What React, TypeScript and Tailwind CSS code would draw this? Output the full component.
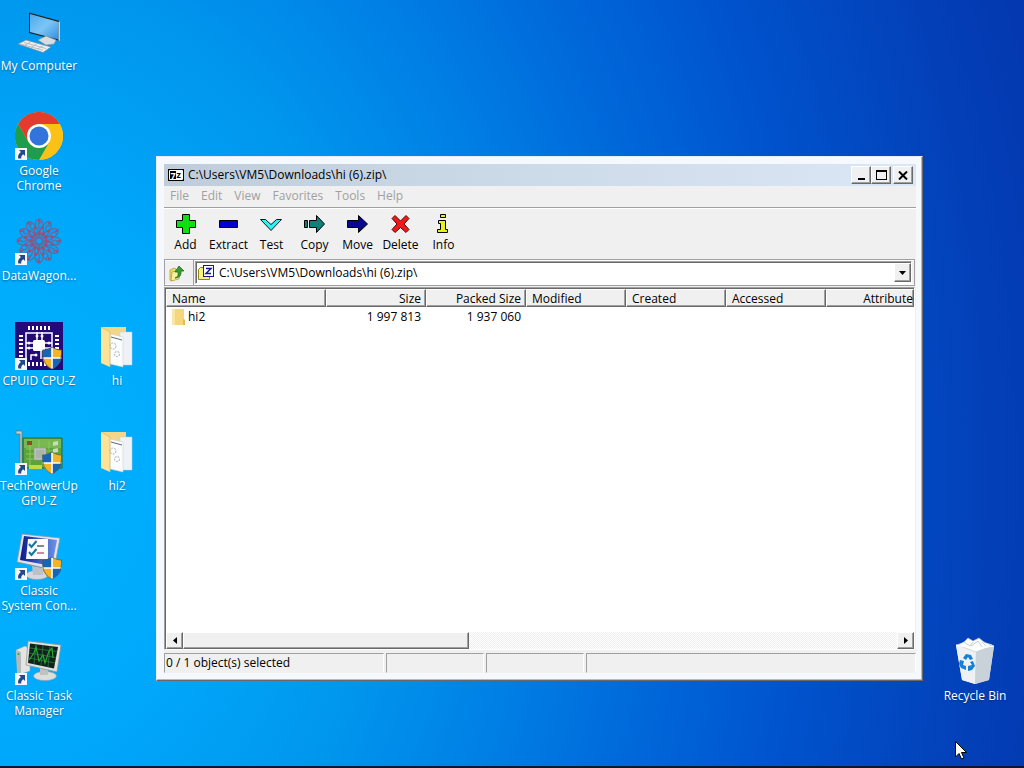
import clsx from 'clsx';
import type { ReactNode } from 'react';

type DesktopShortcut = {
  label: string;
  icon: ReactNode;
  place: string;
  isLink?: boolean;
  hasShield?: boolean;
};

type ToolbarAction = {
  label: string;
  icon: ReactNode;
};

type ArchiveColumn = {
  label: string;
  layout: string;
};

const raised =
  'border border-t-white border-l-white border-r-[#696969] border-b-[#696969] bg-[#f0f0f0] shadow-[inset_-1px_-1px_0_#a0a0a0]';

function ShortcutArrow() {
  return (
    <svg viewBox="0 0 12 12" className="absolute bottom-0 left-0 h-3 w-3" aria-hidden="true">
      <rect width="12" height="12" fill="#f4f6fa" />
      <path d="M4 2h6v6L8.200 6.300C6.500 7.500 6 8.700 6.300 10.500H3.300C2.500 8 3.600 5.800 5.900 4z" fill="#24488c" />
    </svg>
  );
}

function Shield() {
  return (
    <svg viewBox="0 0 22 24" className="absolute right-0 bottom-0 h-6 w-[22px]" aria-hidden="true">
      <path d="M11 1C8 3 5 4 1.500 4C1 13 4 20 11 23z" fill="#1565b8" />
      <path d="M11 1c3 2 6 3 9.500 3C21 13 18 20 11 23z" fill="#f5b326" />
      <path d="M1.600 12H11v11C5 20.500 2.200 16.500 1.600 12z" fill="#f5b326" />
      <path d="M11 12h9.400C19.800 16.500 17 20.500 11 23z" fill="#1565b8" />
      <path d="M11 1.500V23M1.600 12h18.800" stroke="#fff" strokeWidth="1.600" />
      <path d="M11 1C8 3 5 4 1.500 4C1 13 4 20 11 23C18 20 21 13 20.500 4C17 4 14 3 11 1z" fill="none" stroke="#4c5a66" strokeWidth="0.700" />
    </svg>
  );
}

function ComputerIcon() {
  return (
    <svg viewBox="0 0 48 48" className="h-12 w-12" aria-hidden="true">
      <defs>
        <linearGradient id="pc-screen" x1="0" y1="0" x2="1" y2="1">
          <stop offset="0" stopColor="#4aa8ec" />
          <stop offset="0.500" stopColor="#7cc6f6" />
          <stop offset="1" stopColor="#2f8fe0" />
        </linearGradient>
      </defs>
      <path d="M14 5.500L45 14v20L14 26z" fill="#20262c" />
      <path d="M15 7l28.500 8v17.500L15 25z" fill="url(#pc-screen)" />
      <path d="M45 14v20l-1.500-.5V15z" fill="#c8d0d6" />
      <path d="M23 33l8-4 10 4-2 4-8 1z" fill="#d9dde0" stroke="#8c979e" strokeWidth="0.600" />
      <path d="M3 37l8-4 25 7-8 5.500z" fill="#eceff1" stroke="#7d8a92" strokeWidth="0.700" />
      <path d="M6 37.200l22 6M9 35.500l22 6M9.500 38.500l6-3.500M16 40.300l6-3.500M22.500 42l6-3.500" stroke="#a9b3b9" strokeWidth="0.800" />
    </svg>
  );
}

function ChromeIcon() {
  return (
    <svg viewBox="0 0 48 48" className="h-12 w-12" aria-hidden="true">
      <circle cx="24" cy="24" r="24" fill="#fbc116" />
      <path d="M24 24V12h20.800A24 24 0 0 1 24 48l10.400-18z" fill="#fbc116" />
      <path d="M24 24l10.400 6L24 48A24 24 0 0 1 3.200 12l10.400 18z" fill="#1e9e4a" />
      <path d="M3.200 12A24 24 0 0 1 44.800 12H24L13.600 30z" fill="#e33b2e" />
      <circle cx="24" cy="24" r="12" fill="#fff" />
      <circle cx="24" cy="24" r="9.500" fill="#3273dc" />
    </svg>
  );
}

function DataWagonIcon() {
  const petals = [0, 30, 60, 90, 120, 150, 180, 210, 240, 270, 300, 330];
  return (
    <svg viewBox="0 0 48 48" className="h-12 w-12" aria-hidden="true">
      <g fill="none" stroke="#5f6ea0" strokeWidth="1.300">
        {petals.map((angle) => (
          <g key={angle} transform={`rotate(${angle} 24 24)`}>
            <ellipse cx="24" cy="11.500" rx="4.500" ry="9.500" />
            <path d="M24 19l-9-9 2-5M24 2v5" />
          </g>
        ))}
      </g>
      <g fill="#a04c78">
        {petals.map((angle) => (
          <g key={angle} transform={`rotate(${angle} 24 24)`}>
            <circle cx="24" cy="3.500" r="1.300" />
            <circle cx="20" cy="11" r="1.500" />
            <circle cx="24" cy="16" r="1.700" />
          </g>
        ))}
      </g>
    </svg>
  );
}

function CpuIcon() {
  const pins = [14, 18, 22, 26, 30, 34];
  return (
    <svg viewBox="0 0 48 48" className="h-12 w-12" aria-hidden="true">
      <rect width="48" height="48" fill="#230a78" />
      <g fill="#fff">
        {pins.map((p) => (
          <g key={p}>
            <rect x={p - 1} y="4" width="2" height="4" />
            <rect x={p - 1} y="40" width="2" height="4" />
            <rect x="4" y={p - 1} width="4" height="2" />
            <rect x="40" y={p - 1} width="4" height="2" />
          </g>
        ))}
        <rect x="18" y="18" width="12" height="11" rx="1.500" />
        <circle cx="22" cy="14" r="1.500" />
        <circle cx="27" cy="14" r="1.500" />
        <circle cx="14" cy="21" r="1.500" />
        <circle cx="14" cy="26" r="1.500" />
        <circle cx="34" cy="21" r="1.500" />
        <circle cx="21" cy="33" r="1.500" />
      </g>
      <path d="M11 37V11h26v26M22 10v8M27 10v8M11 21h7M11 26h7M30 21h7M30 26h7M21 33h-5v5M26 29v8" fill="none" stroke="#fff" strokeWidth="1.500" />
    </svg>
  );
}

function GpuIcon() {
  return (
    <svg viewBox="0 0 48 48" className="h-12 w-12" aria-hidden="true">
      <path d="M1 4h6v38H5V7H1z" fill="#c9cfbe" stroke="#69725e" strokeWidth="0.700" />
      <path d="M8 11h39v30H8z" fill="#5ba33a" stroke="#2c681f" />
      <path d="M9 12h37v9H9z" fill="#78b850" />
      <path d="M11 22h8M11 27h8M15 13v26M30 24h14M24 13v8M34 14v9M11 32h26" stroke="#94d060" strokeWidth="0.800" />
      <rect x="19" y="21" width="12" height="12" fill="#b9c2b8" stroke="#8f9c8c" strokeWidth="0.600" />
      <rect x="21" y="23" width="8" height="8" fill="#aab5aa" />
      <rect x="12" y="14" width="5" height="4" fill="#8c4c22" />
      <path d="M38 15l5-1v4l-5 1zM38 22l5-1v4l-5 1z" fill="#cbd8c4" />
      <path d="M14 38h13v4H14z" fill="#c8d83c" />
    </svg>
  );
}

function SystemConfigIcon() {
  return (
    <svg viewBox="0 0 48 48" className="h-12 w-12" aria-hidden="true">
      <defs>
        <linearGradient id="sys-screen" x1="0" y1="0" x2="1" y2="0">
          <stop offset="0" stopColor="#0a1b8c" />
          <stop offset="1" stopColor="#6f92ea" />
        </linearGradient>
      </defs>
      <ellipse cx="22" cy="43" rx="11" ry="4.500" fill="#d4d7dc" stroke="#9499a2" strokeWidth="0.600" />
      <path d="M17 34l11 2v7H18z" fill="#bcc0c8" />
      <path d="M7 2l38 4-6 32L2 30z" fill="#e1e3e6" stroke="#8d9298" strokeWidth="0.700" />
      <path d="M9 4l33 4-5 26L5 28z" fill="url(#sys-screen)" />
      <path d="M13 7h20v20H11z" fill="#fafcff" />
      <path d="M14 12l2.500 3 5-6M14 20l2.500 3 5-6" fill="none" stroke="#1676a0" strokeWidth="2" />
      <path d="M22 14h7" stroke="#33384a" strokeWidth="1.200" />
      <path d="M22 21h7" stroke="#c33d44" strokeWidth="1.200" />
    </svg>
  );
}

function TaskManagerIcon() {
  return (
    <svg viewBox="0 0 48 48" className="h-12 w-12" aria-hidden="true">
      <path d="M1 13l9-4 5 3v22L3 38z" fill="#e3e5e4" stroke="#9ba09f" strokeWidth="0.600" />
      <path d="M1 13l5 2v23l-4-2z" fill="#b4bab9" />
      <circle cx="3.500" cy="17" r="1" fill="#2ea44a" />
      <ellipse cx="30" cy="39" rx="11.500" ry="4.500" fill="#dcdedc" stroke="#9ba09f" strokeWidth="0.600" />
      <path d="M25 29l8 2v7h-8z" fill="#bfc3c1" />
      <path d="M13 4l33 4-4 27-31-7z" fill="#dfe1de" stroke="#8d918f" strokeWidth="0.700" />
      <path d="M15 6.500L43 10l-4 21.500L13 26z" fill="#10231a" />
      <path d="M15 11l27 3.500M14 16l27 4.500M14 21l26 5M21 7l-2 20M28 8l-2 21M35 9l-2 21" stroke="#2f7a45" strokeWidth="0.800" />
      <path d="M14 23l5-7 2-6 3 14 4-6 2 8 4-12 3-3 1 10" fill="none" stroke="#24a835" strokeWidth="1.200" />
    </svg>
  );
}

function FolderIcon() {
  return (
    <svg viewBox="0 0 48 48" className="h-12 w-12" aria-hidden="true">
      <path d="M8 5h25v37H17l-9-2z" fill="#f3d789" />
      <path d="M8 5l9 5v35l-9-4z" fill="#fbe39a" />
      <path d="M27 10h12v33H27z" fill="#eef2f6" stroke="#c2cdd6" strokeWidth="0.500" />
      <path d="M17 12l13 3v30l-13-3z" fill="#fbfcfd" stroke="#c8ccd0" strokeWidth="0.500" />
      <path d="M18 15l11 3" stroke="#4d5963" strokeWidth="0.900" />
      <g fill="none" stroke="#b9c0c6" strokeWidth="1.200" strokeDasharray="2 1">
        <circle cx="20" cy="24" r="3" />
        <circle cx="24" cy="32" r="2.500" />
      </g>
      <path d="M8 5l9 5v35" fill="none" stroke="#dcb860" strokeWidth="0.700" />
    </svg>
  );
}

function RecycleBinIcon() {
  return (
    <svg viewBox="0 0 48 48" className="h-12 w-12" aria-hidden="true">
      <path d="M5 8l11-4 24 3 3 2-5 34-14 4-13-4z" fill="#dbe3e8" />
      <path d="M5 8l20 4-1 35-13-4z" fill="#eef1f3" />
      <path d="M25 12l18-3-5 34-14 4z" fill="#c9d2d8" />
      <path d="M7 8l6-3 4-4 5 3 6-3 5 4 7 3-4 3-11 4z" fill="#fbfcfd" stroke="#b9c6d0" strokeWidth="0.600" />
      <path d="M13 5l6 4 3-4M20 9l7-5 4 6M31 5l4 4" fill="none" stroke="#b8c4cc" strokeWidth="0.800" />
      <path d="M5 8l20 4 18-3" fill="none" stroke="#fff" strokeWidth="1.200" />
      <g fill="#1680d8">
        <path d="M12 21l3-4 5 1 2 4-3 1-2-3-2 3z" />
        <path d="M9 23l4 1-1 4 3 1v4l-5-2-2-4z" />
        <path d="M22 24l2 5-3 4-4 1v-5l4-1-2-3z" />
      </g>
    </svg>
  );
}

const shortcuts: DesktopShortcut[] = [
  { label: 'My Computer', icon: <ComputerIcon />, place: 'col-start-1 row-start-1' },
  { label: 'Google Chrome', icon: <ChromeIcon />, place: 'col-start-1 row-start-2', isLink: true },
  { label: 'DataWagon...', icon: <DataWagonIcon />, place: 'col-start-1 row-start-3', isLink: true },
  { label: 'CPUID CPU-Z', icon: <CpuIcon />, place: 'col-start-1 row-start-4', isLink: true, hasShield: true },
  { label: 'TechPowerUp GPU-Z', icon: <GpuIcon />, place: 'col-start-1 row-start-5', isLink: true, hasShield: true },
  { label: 'Classic System Con...', icon: <SystemConfigIcon />, place: 'col-start-1 row-start-6', isLink: true, hasShield: true },
  { label: 'Classic Task Manager', icon: <TaskManagerIcon />, place: 'col-start-1 row-start-7', isLink: true },
  { label: 'hi', icon: <FolderIcon />, place: 'col-start-2 row-start-4' },
  { label: 'hi2', icon: <FolderIcon />, place: 'col-start-2 row-start-5' },
  { label: 'Recycle Bin', icon: <RecycleBinIcon />, place: 'col-start-4 row-start-7' },
];

const menus = ['File', 'Edit', 'View', 'Favorites', 'Tools', 'Help'];

const actions: ToolbarAction[] = [
  {
    label: 'Add',
    icon: <path d="M8.500 2.500h7v6h6v7h-6v6h-7v-6h-6v-7h6z" fill="#10e010" />,
  },
  {
    label: 'Extract',
    icon: <path d="M2.500 8.500h18v7h-18z" fill="#0000d0" />,
  },
  {
    label: 'Test',
    icon: <path d="M.5 7.500h5l5.500 5 5.500-5h5L11 18.500z" fill="#30f0f4" strokeWidth="0.900" />,
  },
  {
    label: 'Copy',
    icon: <path d="M1.500 8.500h3v7h-3zM6.500 8.500h7v-5l8 8.500-8 8.500v-5h-7z" fill="#128078" />,
  },
  {
    label: 'Move',
    icon: <path d="M1.500 8.500h11v-5l9 8.500-9 8.500v-5h-11z" fill="#080890" />,
  },
  {
    label: 'Delete',
    icon: <path d="M6 3.500l5.500 5.500L17 3.500l3 3-5 5.500 5 5.500-3 3-5.500-5-5.500 5-3-3 5-5.500-5-5.500z" fill="#f01818" stroke="#500808" />,
  },
  {
    label: 'Info',
    icon: <path d="M8.500 2.500h5v3h-5zM6.500 8.500h7v9h2v3h-10v-3h3v-6h-2z" fill="#e8f020" />,
  },
];

const columns: ArchiveColumn[] = [
  { label: 'Name', layout: 'w-40 px-[5px] text-left' },
  { label: 'Size', layout: 'w-[100px] px-1 text-right' },
  { label: 'Packed Size', layout: 'w-[100px] px-1 text-right' },
  { label: 'Modified', layout: 'w-[100px] px-[5px] text-left' },
  { label: 'Created', layout: 'w-[100px] px-[5px] text-left' },
  { label: 'Accessed', layout: 'w-[100px] px-[5px] text-left' },
  { label: 'Attribute', layout: 'text-right' },
];

const files = [{ name: 'hi2', size: '1 997 813', packedSize: '1 937 060' }];

function DesktopItem({ label, icon, place, isLink, hasShield }: DesktopShortcut) {
  return (
    <button type="button" className={clsx('flex flex-col items-center gap-[3px] pt-[7px] text-white', place)}>
      <span className="relative block h-12 w-12">
        {icon}
        {isLink && <ShortcutArrow />}
        {hasShield && <Shield />}
      </span>
      <span className="w-20 text-center leading-[15px] [text-shadow:0_1px_2px_rgba(0,0,0,0.4)]">{label}</span>
    </button>
  );
}

function TitleBar({ path }: { path: string }) {
  return (
    <header className="flex h-[22px] shrink-0 items-center bg-linear-to-r from-[#bfcddb] to-[#dbe7f4] pr-[3px] pl-1">
      <svg viewBox="0 0 16 12" className="h-3 w-4" aria-hidden="true">
        <rect width="16" height="12" fill="#000" />
        <path d="M1.500 1.500h13v9h-13z" fill="none" stroke="#fff" />
        <path d="M8 2h6v8H8z" fill="#fff" />
        <text x="2.500" y="9.500" fontSize="9" fontWeight="700" fill="#fff">7</text>
        <text x="8.500" y="9" fontSize="9" fontWeight="700" fill="#000">z</text>
      </svg>
      <h1 className="ml-1 flex-1 truncate">{path}</h1>
      <button type="button" aria-label="Minimize" className={clsx('flex h-[18px] w-5 items-end justify-center pb-[3px]', raised)}>
        <span className="h-0.5 w-[7px] bg-black" />
      </button>
      <button type="button" aria-label="Maximize" className={clsx('flex h-[18px] w-5 items-center justify-center', raised)}>
        <span className="h-2.5 w-[11px] border border-t-2 border-black" />
      </button>
      <button type="button" aria-label="Close" className={clsx('ml-0.5 flex h-[18px] w-5 items-center justify-center', raised)}>
        <svg viewBox="0 0 10 9" className="h-[9px] w-2.5" aria-hidden="true">
          <path d="M1 .5l8 8M9 .5l-8 8" stroke="#000" strokeWidth="2" />
        </svg>
      </button>
    </header>
  );
}

function AddressBar({ path }: { path: string }) {
  return (
    <div className="mr-px flex h-[27px] shrink-0 items-center border border-[#a0a0a0] pr-0.5 shadow-[inset_0_1px_0_#fff,inset_0_-1px_0_#fff]">
      <button type="button" aria-label="Up one level" className="flex h-full w-7 items-center justify-center pr-1">
        <svg viewBox="0 0 16 18" className="h-[18px] w-4" aria-hidden="true">
          <path d="M1 6l4-2 2 1v10l-5 2-1-1z" fill="#e9dc6a" stroke="#a59a38" strokeWidth="0.700" />
          <path d="M3 8l9-2-2 9-8 2z" fill="#f8f0a0" stroke="#a59a38" strokeWidth="0.700" />
          <path d="M6 14c3-1 3.500-3 3-6H6l4-6 5 5h-3c.5 4-1.500 7-6 7z" fill="#35a02c" stroke="#1d5c18" strokeWidth="0.700" />
        </svg>
      </button>
      <div className="h-full w-px bg-[#a0a0a0]" />
      <div className="ml-px flex h-[23px] flex-1 items-center border border-t-[#a0a0a0] border-r-white border-b-white border-l-[#a0a0a0] bg-white shadow-[inset_1px_1px_0_#696969]">
        <svg viewBox="0 0 17 16" className="ml-0.5 h-4 w-[17px]" aria-hidden="true">
          <path d="M.5 4.500l2-2h4v2h5v10H.5z" fill="#f6f27a" stroke="#8a8420" />
          <rect x="5.500" y=".5" width="10" height="11" fill="#fff" stroke="#181890" />
          <path d="M8 3.500h5l-5 5h5" fill="none" stroke="#181890" strokeWidth="1.500" />
        </svg>
        <input
          type="text"
          aria-label="Archive path"
          defaultValue={path}
          className="ml-1 h-[19px] min-w-0 flex-1 bg-transparent outline-none"
        />
        <button type="button" aria-label="Recent paths" className={clsx('flex h-[19px] w-[17px] items-center justify-center', raised)}>
          <svg viewBox="0 0 7 4" className="h-1 w-[7px]" aria-hidden="true">
            <path d="M0 0h7L3.500 4z" fill="#000" />
          </svg>
        </button>
      </div>
    </div>
  );
}

function FileList() {
  return (
    <div className="mt-px mr-px flex min-h-0 flex-1 flex-col overflow-hidden border border-t-[#a0a0a0] border-r-white border-b-white border-l-[#a0a0a0] bg-white">
      <div className="flex min-h-0 flex-1 flex-col overflow-hidden border-t border-l border-[#696969]">
        <div className="min-h-0 flex-1 overflow-hidden">
          <table className="w-full table-fixed border-separate border-spacing-0">
            <thead>
              <tr>
                {columns.map((column) => (
                  <th key={column.label} scope="col" className={clsx('h-[18px] py-0 leading-[15px] font-normal', column.layout, raised)}>
                    {column.label}
                  </th>
                ))}
              </tr>
            </thead>
            <tbody>
              {files.map((file) => (
                <tr key={file.name} className="h-5">
                  <td className="p-0 pl-1.5">
                    <div className="flex items-center gap-[3px]">
                      <svg viewBox="0 0 13 16" className="h-4 w-[13px]" aria-hidden="true">
                        <path d="M0 0h12v10l1 1v5H0z" fill="#f6d67c" />
                        <path d="M0 0h3v16H0z" fill="#fae6a4" />
                        <path d="M11 10l2 1v5h-2z" fill="#e5bb52" />
                      </svg>
                      {file.name}
                    </div>
                  </td>
                  <td className="p-0 pr-[5px] text-right">{file.size}</td>
                  <td className="p-0 pr-[5px] text-right">{file.packedSize}</td>
                  <td colSpan={4} />
                </tr>
              ))}
            </tbody>
          </table>
        </div>
        <div className="flex h-[17px] shrink-0 bg-[repeating-conic-gradient(#f0f0f0_0_25%,#ffffff_0_50%)] bg-[length:2px_2px]">
          <button type="button" aria-label="Scroll left" className={clsx('flex w-[17px] items-center justify-center', raised)}>
            <svg viewBox="0 0 4 7" className="h-[7px] w-1" aria-hidden="true">
              <path d="M4 0v7L0 3.500z" fill="#000" />
            </svg>
          </button>
          <div className="flex-1">
            <div className={clsx('h-full w-2/5', raised)} />
          </div>
          <button type="button" aria-label="Scroll right" className={clsx('flex w-[17px] items-center justify-center', raised)}>
            <svg viewBox="0 0 4 7" className="h-[7px] w-1" aria-hidden="true">
              <path d="M0 0v7l4-3.500z" fill="#000" />
            </svg>
          </button>
        </div>
      </div>
    </div>
  );
}

function ArchiveWindow() {
  const path = 'C:\\Users\\VM5\\Downloads\\hi (6).zip\\';
  const pane = 'border border-t-[#a0a0a0] border-r-white border-b-transparent border-l-[#a0a0a0]';

  return (
    <section className="absolute top-[156px] right-[101px] bottom-[87px] left-[156px] flex flex-col border border-t-[#e3edf8] border-r-[#696969] border-b-[#696969] border-l-[#e3edf8] bg-[#f5f8fd] p-[7px] pr-1.5 text-black shadow-[inset_-1px_-1px_0_#b4bac4]">
      <TitleBar path={path} />
      <div className="flex min-h-0 flex-1 flex-col bg-[#f0f0f0]">
        <nav className="flex h-[22px] shrink-0 items-center border-b border-[#a0a0a0] pb-0.5 text-[#a0a0a0]">
          {menus.map((menu) => (
            <button key={menu} type="button" className="px-1.5 leading-[18px]">
              {menu}
            </button>
          ))}
        </nav>
        <div className="flex h-[51px] shrink-0 border-t border-white pt-[3px]">
          {actions.map((action) => (
            <button key={action.label} type="button" className="flex w-[43px] flex-col items-center">
              <svg viewBox="0 0 23 24" className="h-6 w-[23px]" stroke="#000" strokeWidth="1" aria-hidden="true">
                {action.icon}
              </svg>
              <span className="leading-[18px]">{action.label}</span>
            </button>
          ))}
        </div>
        <AddressBar path={path} />
        <FileList />
        <footer className="mt-[3px] flex h-5 shrink-0 gap-0.5 leading-[18px]">
          <div className={clsx('w-[220px] pl-px', pane)}>0 / 1 object(s) selected</div>
          <div className={clsx('w-[98px]', pane)} />
          <div className={clsx('w-[98px]', pane)} />
          <div className={clsx('flex-1', pane)} />
        </footer>
      </div>
    </section>
  );
}

export default function App() {
  return (
    <div className="relative flex min-h-screen w-full flex-col overflow-hidden bg-[radial-gradient(105%_180%_at_0%_62%,#00b4ff_0%,#00a8fb_20%,#0096ee_36%,#007ee4_50%,#0068da_62%,#0052cc_76%,#0340b8_92%,#0338b0_100%)] font-['Open_Sans',sans-serif] text-xs">
      <main className="grid flex-1 auto-rows-[105px] grid-cols-[78px_78px_1fr_78px] pr-2.5">
        {shortcuts.map((shortcut) => (
          <DesktopItem key={shortcut.label} {...shortcut} />
        ))}
      </main>
      <ArchiveWindow />
      <div className="h-0.5 bg-[#0b1830]" />
      <svg viewBox="0 0 12 19" className="pointer-events-none absolute right-[57px] bottom-2 h-[19px] w-3" aria-hidden="true">
        <path d="M.5.5v15.500l3.500-3.500 2.500 5.500 2.500-1-2.500-5.500h5z" fill="#fff" stroke="#000" />
      </svg>
    </div>
  );
}
